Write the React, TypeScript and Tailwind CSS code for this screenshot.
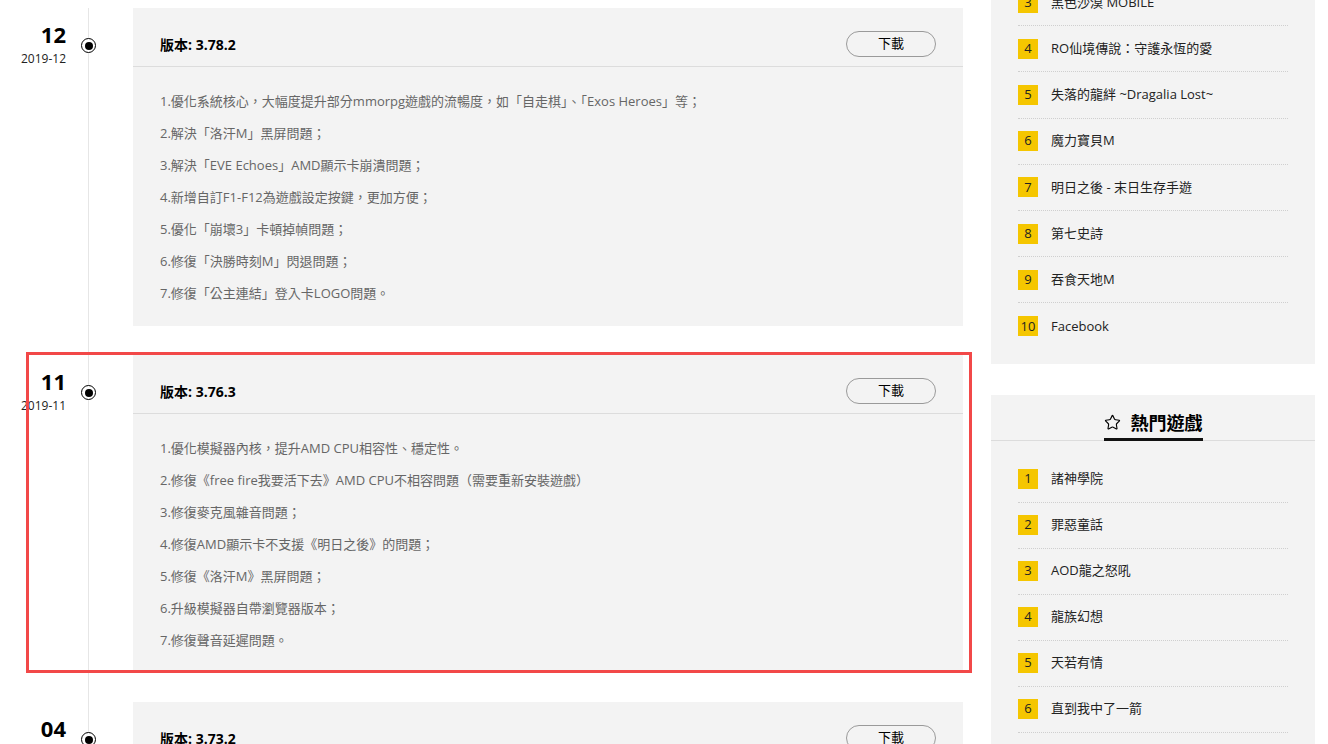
import { Star } from "lucide-react";

const font = "font-['Open_Sans','Noto_Sans_CJK_TC',sans-serif]";

type Release = {
  month: string;
  date: string;
  version: string;
  notes: string[];
  highlight?: boolean;
};

const releases: Release[] = [
  {
    month: "12",
    date: "2019-12",
    version: "3.78.2",
    notes: [
      "1.優化系統核心，大幅度提升部分mmorpg遊戲的流暢度，如「自走棋」、「Exos Heroes」等；",
      "2.解決「洛汗M」黑屏問題；",
      "3.解決「EVE Echoes」AMD顯示卡崩潰問題；",
      "4.新增自訂F1-F12為遊戲設定按鍵，更加方便；",
      "5.優化「崩壞3」卡頓掉幀問題；",
      "6.修復「決勝時刻M」閃退問題；",
      "7.修復「公主連結」登入卡LOGO問題。",
    ],
  },
  {
    month: "11",
    date: "2019-11",
    version: "3.76.3",
    highlight: true,
    notes: [
      "1.優化模擬器內核，提升AMD CPU相容性、穩定性。",
      "2.修復《free fire我要活下去》AMD CPU不相容問題（需要重新安裝遊戲）",
      "3.修復麥克風雜音問題；",
      "4.修復AMD顯示卡不支援《明日之後》的問題；",
      "5.修復《洛汗M》黑屏問題；",
      "6.升級模擬器自帶瀏覽器版本；",
      "7.修復聲音延遲問題。",
    ],
  },
  {
    month: "04",
    date: "2019-04",
    version: "3.73.2",
    notes: [],
  },
];

const topGames = [
  { rank: 3, name: "黑色沙漠 MOBILE" },
  { rank: 4, name: "RO仙境傳說：守護永恆的愛" },
  { rank: 5, name: "失落的龍絆 ~Dragalia Lost~" },
  { rank: 6, name: "魔力寶貝M" },
  { rank: 7, name: "明日之後 - 末日生存手遊" },
  { rank: 8, name: "第七史詩" },
  { rank: 9, name: "吞食天地M" },
  { rank: 10, name: "Facebook" },
];

const hotGames = [
  { rank: 1, name: "諸神學院" },
  { rank: 2, name: "罪惡童話" },
  { rank: 3, name: "AOD龍之怒吼" },
  { rank: 4, name: "龍族幻想" },
  { rank: 5, name: "天若有情" },
  { rank: 6, name: "直到我中了一箭" },
  { rank: 7, name: "劍與遠征" },
];

const GameList = ({
  games,
  lastBorder,
  rowClass,
}: {
  games: { rank: number; name: string }[];
  lastBorder?: boolean;
  rowClass: string;
}) => (
  <ul className="px-[27px]">
    {games.map((g, i) => (
      <li
        key={g.rank}
        className={
          i < games.length - 1 || lastBorder
            ? `${rowClass} flex items-center border-b border-dotted border-[#cfcfcf]`
            : `${rowClass} flex items-center`
        }
      >
        <span className="flex h-5 w-5 items-center justify-center bg-[#f5c600] text-[13px] text-[#222]">
          {g.rank}
        </span>
        <span className="ml-[13px] text-[13px] text-[#222]">{g.name}</span>
      </li>
    ))}
  </ul>
);

const ReleaseRow = ({ release }: { release: Release }) => (
  <div className="relative flex">
    <div className="flex w-[133px] shrink-0 pt-[11px]">
      <div className="w-[66px] text-right">
        <div className="text-[22px] font-bold leading-[30px] text-black">
          {release.month}
        </div>
        <div className="text-[12px] leading-[20px] text-[#222]">
          {release.date}
        </div>
      </div>
      <div className="ml-[15px] mt-[19px] flex h-[15px] w-[15px] items-center justify-center rounded-full border-[1.5px] border-black bg-white">
        <div className="h-[8px] w-[8px] rounded-full bg-black" />
      </div>
    </div>
    <div className="h-[318px] w-[830px] bg-[#f3f3f3]">
      <div className="flex h-[59px] items-center justify-between border-b border-[#dcdcdc] px-[27px] pt-[14px]">
        <span className="text-[14px] font-bold text-black">
          版本: {release.version}
        </span>
        <button className="h-[26px] w-[90px] rounded-full border border-[#9a9a9a] text-[13px] text-black">
          下載
        </button>
      </div>
      <div className="px-[27px] pt-[18px] pb-[17px]">
        {release.notes.map((n) => (
          <p key={n} className="text-[13px] leading-[32px] text-[#666]">
            {n}
          </p>
        ))}
      </div>
    </div>
    {release.highlight ? (
      <div className="pointer-events-none absolute -top-[3px] bottom-0 left-[26px] w-[946px] border-[3px] border-[#f24848]" />
    ) : null}
  </div>
);

export default function App() {
  return (
    <div className={`${font} h-[744px] w-[1328px] overflow-hidden bg-white`}>
      <div className="flex">
        <div className="relative flex flex-col gap-[29px] pt-2">
          <div className="absolute left-[88px] top-2 bottom-0 w-px bg-[#e6e6e6]" />
          {releases.map((r) => (
            <ReleaseRow key={r.version} release={r} />
          ))}
        </div>

        <div className="ml-[28px] flex w-[324px] flex-col gap-[31px]">
          <div className="-mt-[20px] bg-[#f3f3f3] pb-[14px]">
            <GameList games={topGames} rowClass="h-[46.2px]" />
          </div>

          <div className="bg-[#f3f3f3]">
            <div className="flex justify-center border-b border-[#dcdcdc] pt-4">
              <div className="-mb-px flex items-center gap-[10px] border-b-[3px] border-[#111] pb-[3px]">
                <Star className="h-[17px] w-[17px] text-black" strokeWidth={1.6} />
                <span className="text-[18px] font-bold leading-[24px] text-black">
                  熱門遊戲
                </span>
              </div>
            </div>
            <div className="pt-[16px]">
              <GameList games={hotGames} lastBorder rowClass="h-[46px]" />
            </div>
          </div>
        </div>
      </div>
    </div>
  );
}
